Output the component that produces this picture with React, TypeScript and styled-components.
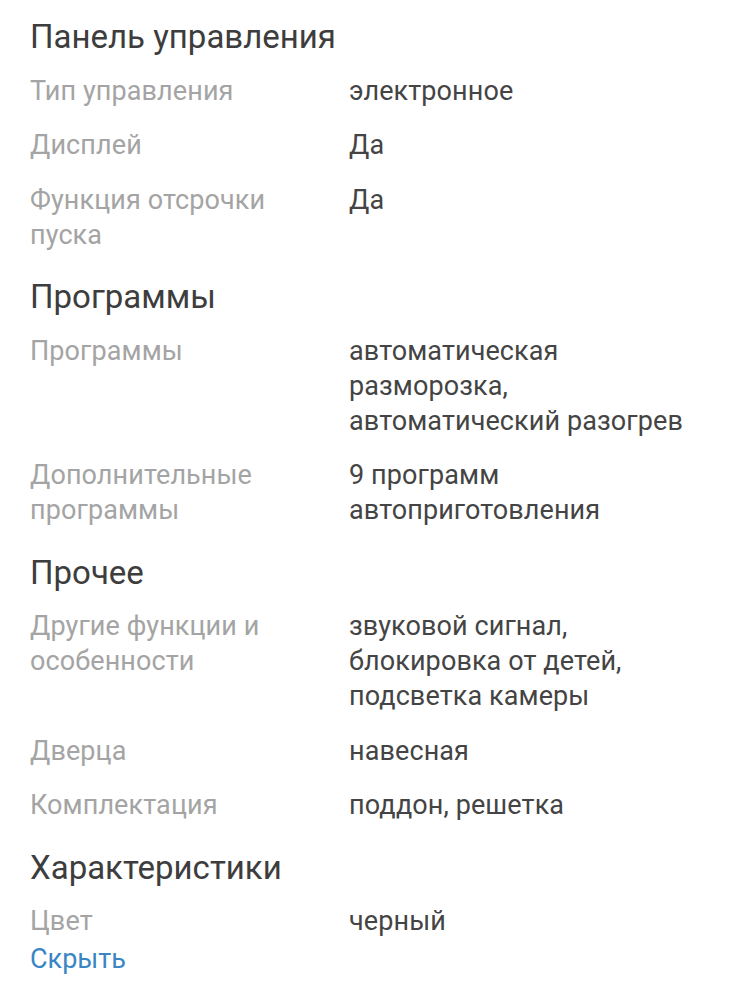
import React from "react";
import styled, { createGlobalStyle } from "styled-components";

const Global = createGlobalStyle`
  html, body { margin: 0; padding: 0; background: #ffffff; }
  body { font-family: Roboto, "Noto Sans", "Liberation Sans", sans-serif; }
`;

const Page = styled.div`
  padding: 17px 30px 20px 30px;
  display: flex;
  flex-direction: column;
`;

const Section = styled.section`
  display: flex;
  flex-direction: column;
  & + & { margin-top: 24.5px; }
`;

const Heading = styled.h2`
  margin: 0 0 16.5px 0;
  font-size: 33px;
  line-height: 40px;
  font-weight: 400;
  color: #3d3d3d;
`;

const Rows = styled.dl`
  margin: 0;
  display: grid;
  grid-template-columns: 290px 1fr;
  column-gap: 29px;
  row-gap: 19.5px;
`;

const Label = styled.dt`
  margin: 0;
  font-size: 27px;
  line-height: 35px;
  letter-spacing: 0.1px;
  color: #a4a4a4;
`;

const Value = styled.dd`
  margin: 0;
  font-size: 27px;
  line-height: 35px;
  letter-spacing: 0.1px;
  color: #444444;
`;

const Link = styled.a`
  margin-top: 2px;
  font-size: 27px;
  line-height: 36px;
  color: #3a86c4;
  text-decoration: none;
  align-self: flex-start;
  cursor: pointer;
`;

type Row = [string, string];
const data: { title: string; rows: Row[] }[] = [
  {
    title: "Панель управления",
    rows: [
      ["Тип управления", "электронное"],
      ["Дисплей", "Да"],
      ["Функция отсрочки пуска", "Да"],
    ],
  },
  {
    title: "Программы",
    rows: [
      ["Программы", "автоматическая разморозка, автоматический разогрев"],
      ["Дополнительные программы", "9 программ автоприготовления"],
    ],
  },
  {
    title: "Прочее",
    rows: [
      ["Другие функции и особенности", "звуковой сигнал, блокировка от детей, подсветка камеры"],
      ["Дверца", "навесная"],
      ["Комплектация", "поддон, решетка"],
    ],
  },
  {
    title: "Характеристики",
    rows: [["Цвет", "черный"]],
  },
];

export default function App() {
  return (
    <>
      <Global />
      <Page>
        {data.map((s) => (
          <Section key={s.title}>
            <Heading>{s.title}</Heading>
            <Rows>
              {s.rows.map(([l, v]) => (
                <React.Fragment key={l}>
                  <Label>{l}</Label>
                  <Value>{v}</Value>
                </React.Fragment>
              ))}
            </Rows>
          </Section>
        ))}
        <Link>Скрыть</Link>
      </Page>
    </>
  );
}
